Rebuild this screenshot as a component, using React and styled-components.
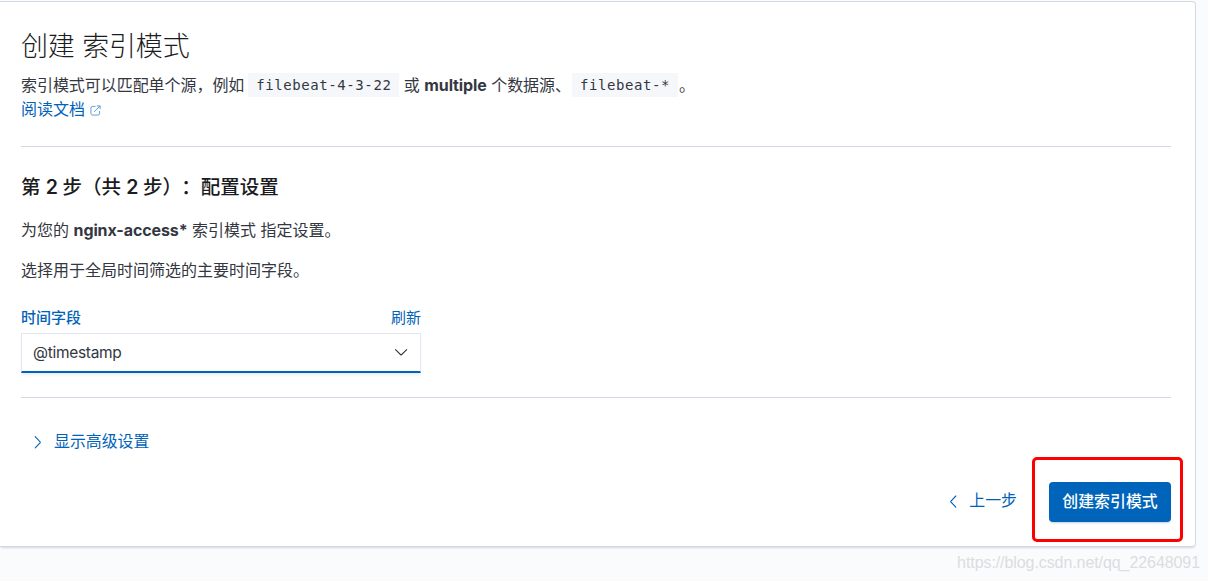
import React, { useState } from "react";
import styled, { createGlobalStyle } from "styled-components";

const App = () => {
  const [field, setField] = useState("@timestamp");

  return (
    <>
      <GlobalStyle />
      <Page>
        <Panel>
          <Title>创建 索引模式</Title>
          <Intro>
            索引模式可以匹配单个源，例如 <Code>filebeat-4-3-22</Code> 或{" "}
            <strong>multiple</strong> 个数据源、<Code $gap>filebeat-*</Code>
            <Stop>。</Stop>
          </Intro>
          <DocLink href="#docs">
            阅读文档
            <PopoutIcon />
          </DocLink>

          <Rule />

          <StepTitle>
            第 <b>2</b> 步（共 <b>2</b> 步）<Colon>：</Colon>配置设置
          </StepTitle>
          <Text>
            为您的 <strong>nginx-access*</strong> 索引模式 指定设置。
          </Text>
          <Text>选择用于全局时间筛选的主要时间字段。</Text>

          <Field>
            <FieldHead>
              <FieldLabel htmlFor="timeField">时间字段</FieldLabel>
              <Refresh type="button">刷新</Refresh>
            </FieldHead>
            <SelectWrapper>
              <Select
                id="timeField"
                value={field}
                onChange={e => setField(e.target.value)}
              >
                <option>@timestamp</option>
              </Select>
              <Arrow d="M2.5 4.7l5.2 5a.7.7 0 0 0 .8 0l5.2-5" />
            </SelectWrapper>
          </Field>

          <Rule />

          <Advanced type="button">
            <Chevron d="M5.2 2.6l5 5.4a.7.7 0 0 1 0 .6L5.2 13.8" />
            <span>显示高级设置</span>
          </Advanced>

          <Footer>
            <Back type="button">
              <Chevron d="M10.8 3l-5 5.3a.7.7 0 0 0 0 .6l5 5.3" />
              <span>上一步</span>
            </Back>
            <Highlight>
              <Create type="button">创建索引模式</Create>
            </Highlight>
          </Footer>
        </Panel>
        <Watermark>https://blog.csdn.net/qq_22648091</Watermark>
      </Page>
    </>
  );
};

const PopoutIcon = () => (
  <Popout viewBox="0 0 12 12">
    <path d="M6 1.5H3a2 2 0 0 0-2 2V9a2 2 0 0 0 2 2h5.500a2 2 0 0 0 2-2V6.500M4.500 7.500L11 1M7.500 1H11v3.500" />
  </Popout>
);

const Chevron = ({ d }) => (
  <Icon viewBox="0 0 16 16">
    <path d={d} />
  </Icon>
);

const Arrow = ({ d }) => (
  <ArrowIcon viewBox="0 0 16 16">
    <path d={d} />
  </ArrowIcon>
);

const GlobalStyle = createGlobalStyle`
  * { box-sizing: border-box; }
  body {
    margin: 0;
    background: #fafbfd;
    color: #343741;
    font-family: Inter, "Noto Sans CJK SC", sans-serif;
    font-size: 16px;
    line-height: 24px;
  }
  button { font-family: inherit; }
  strong { font-weight: 700; letter-spacing: -0.1px; }
`;

const Page = styled.div`
  height: 581px;
  overflow: hidden;
  padding-top: 1px;
`;

const Panel = styled.main`
  width: 1196px;
  height: 546px;
  padding: 25px 24px 0 21px;
  background: #fff;
  border: 1px solid #d3dae6;
  border-left: 0;
  border-radius: 0 4px 4px 0;
  box-shadow: 0 2px 2px -1px rgba(152, 162, 179, 0.4);
`;

const Title = styled.h1`
  margin: 0;
  height: 46px;
  line-height: 40px;
  font-size: 27px;
  font-weight: 300;
  letter-spacing: -0.15px;
  color: #1a1c21;
`;

const Intro = styled.p`
  margin: 0;
  height: 24px;
  white-space: nowrap;
  letter-spacing: -0.05px;
`;

const Code = styled.code`
  display: inline-block;
  height: 24px;
  padding: 0 8px;
  margin-left: ${props => (props.$gap ? "1px" : "-0.5px")};
  background: #f5f7fa;
  font-family: "DejaVu Sans Mono", monospace;
  font-size: 14px;
  letter-spacing: 0.58px;
  line-height: 25px;
  vertical-align: top;
`;

const Stop = styled.span`
  margin-left: 1px;
`;

const DocLink = styled.a`
  display: flex;
  align-items: center;
  height: 24px;
  color: #0063b8;
  text-decoration: none;
`;

const Popout = styled.svg`
  width: 11px;
  height: 11px;
  margin: 2px 0 0 5px;
  fill: none;
  stroke: #4d97d4;
  stroke-width: 1;
`;

const Rule = styled.hr`
  height: 1px;
  margin: 25px 0 24px;
  border: 0;
  background: #d3dae6;
`;

const StepTitle = styled.h2`
  margin: 0 0 15px;
  padding-top: 1px;
  line-height: 31px;
  font-size: 19.5px;
  font-weight: 500;
  color: #1a1c21;
  white-space: nowrap;
  text-spacing-trim: space-all;

  b {
    font-weight: 600;
    letter-spacing: -0.5px;
  }
`;

const Colon = styled.span`
  margin: 0 -1px 0 -1px;
  padding-right: 1px;
`;

const Text = styled.p`
  margin: 0 0 16px;
`;

const Field = styled.div`
  width: 400px;
  padding-top: 8px;
  margin-bottom: -1px;
`;

const FieldHead = styled.div`
  display: flex;
  justify-content: space-between;
  height: 27px;
  line-height: 24px;
  font-size: 15px;
`;

const FieldLabel = styled.label`
  color: #0063b8;
  font-weight: 500;
`;

const Refresh = styled.button`
  height: 24px;
  padding: 0;
  border: 0;
  background: none;
  color: #0063b8;
  font-size: 15px;
  line-height: 20px;
`;

const SelectWrapper = styled.div`
  display: flex;
  align-items: center;
  height: 40px;
  padding-right: 11px;
  border: 1px solid #e3e6f0;
  border-bottom: 2px solid #0063b8;
  box-shadow: 0 3px 3px -1px rgba(152, 162, 179, 0.2);
`;

const Select = styled.select`
  flex: 1;
  height: 36px;
  padding: 0 0 1px 11px;
  border: 0;
  outline: 0;
  appearance: none;
  background: transparent;
  color: #343741;
  font-family: Inter, sans-serif;
  font-size: 15.5px;
  letter-spacing: -0.3px;
`;

const Icon = styled.svg`
  width: 16px;
  height: 16px;
  fill: none;
  stroke: currentColor;
  stroke-width: 1.1;
  stroke-linecap: round;
`;

const ArrowIcon = styled(Icon)`
  stroke: #343741;
`;

const LinkButton = styled.button`
  display: flex;
  align-items: center;
  height: 38px;
  padding: 2px 0 0;
  border: 0;
  background: none;
  color: #0063b8;
  font-size: 15.9px;
  line-height: 22px;
  white-space: nowrap;
`;

const Advanced = styled(LinkButton)`
  gap: 8px;
  margin-left: 9px;
`;

const Footer = styled.div`
  display: flex;
  align-items: center;
  justify-content: flex-end;
  margin: -3px -12px 0 0;
`;

const Back = styled(LinkButton)`
  gap: 8px;
  margin-right: 15px;
  padding-top: 3px;
`;

const Highlight = styled.div`
  width: 151px;
  height: 85px;
  padding: 22px 0 0 14px;
  border: 3px solid #fe0000;
  border-radius: 5px;
`;

const Create = styled.button`
  width: 122px;
  height: 40px;
  padding: 0 0 3px;
  border: 0;
  border-radius: 4px;
  background: #0065ba;
  box-shadow: 0 2px 2px -1px rgba(54, 97, 126, 0.3);
  color: #fff;
  font-size: 15.9px;
  font-weight: 500;
`;

const Watermark = styled.div`
  padding: 4px 8px 0 0;
  text-align: right;
  font-family: "Liberation Sans", Arial, sans-serif;
  font-size: 16px;
  letter-spacing: -0.08px;
  color: #dcdddf;
`;

export default App;
